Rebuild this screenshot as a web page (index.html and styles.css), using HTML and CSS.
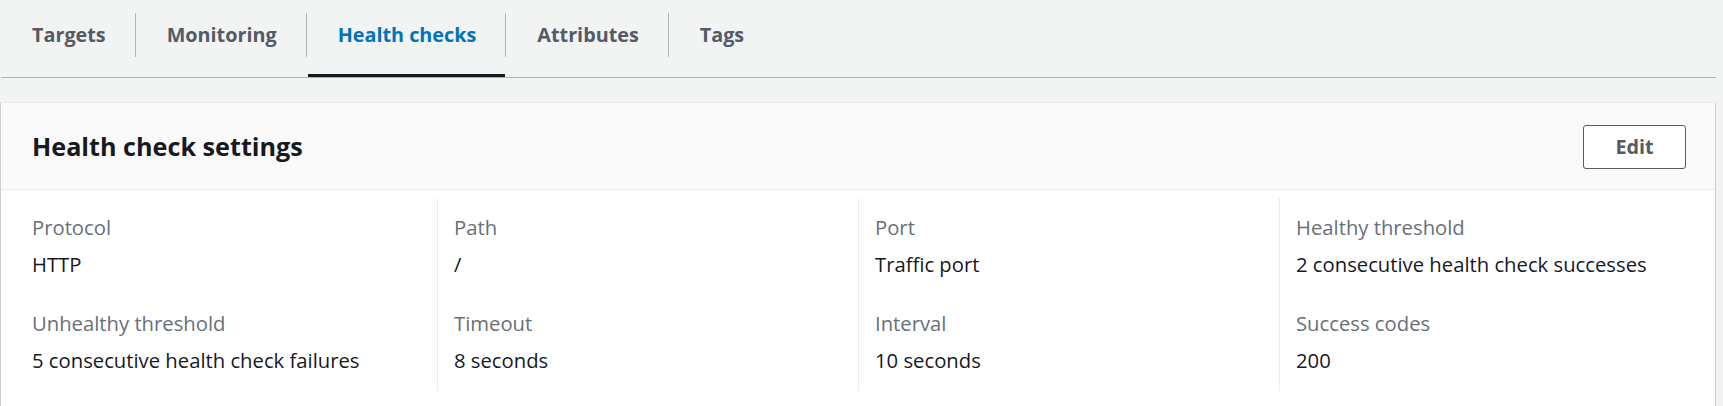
FILE: index.html
```html
<!DOCTYPE html>
<html lang="en">
<head>
<meta charset="utf-8">
<title>Health checks</title>
<link rel="stylesheet" href="styles.css">
</head>
<body>
<div class="page">
  <div class="tabs">
    <div class="tab"><span class="tab-label first">Targets</span></div>
    <div class="tab"><span class="tab-label">Monitoring</span></div>
    <div class="tab active"><span class="tab-label">Health checks</span></div>
    <div class="tab"><span class="tab-label">Attributes</span></div>
    <div class="tab"><span class="tab-label">Tags</span></div>
  </div>
  <div class="card">
    <div class="card-header">
      <h2 class="card-title">Health check settings</h2>
      <button class="btn">Edit</button>
    </div>
    <div class="card-body">
      <div class="col">
        <div class="pair"><div class="label">Protocol</div><div class="value">HTTP</div></div>
        <div class="pair"><div class="label">Unhealthy threshold</div><div class="value">5 consecutive health check failures</div></div>
      </div>
      <div class="col">
        <div class="pair"><div class="label">Path</div><div class="value">/</div></div>
        <div class="pair"><div class="label">Timeout</div><div class="value">8 seconds</div></div>
      </div>
      <div class="col">
        <div class="pair"><div class="label">Port</div><div class="value">Traffic port</div></div>
        <div class="pair"><div class="label">Interval</div><div class="value">10 seconds</div></div>
      </div>
      <div class="col">
        <div class="pair"><div class="label">Healthy threshold</div><div class="value">2 consecutive health check successes</div></div>
        <div class="pair"><div class="label">Success codes</div><div class="value">200</div></div>
      </div>
    </div>
  </div>
</div>
</body>
</html>
```
FILE: styles.css
```css
* { box-sizing: border-box; }
html, body { margin: 0; padding: 0; }
body {
  background: #f2f3f3;
  font-family: "Open Sans", "Noto Sans", Arial, sans-serif;
  font-size: 20.25px;
  line-height: 30px;
  color: #16191f;
  overflow: hidden;
}
.page {
  padding-right: 7px;
}
.tabs {
  display: flex;
  height: 78px;
  border-bottom: 1px solid #aab7b8;
  margin-left: 1px;
}
.tab {
  position: relative;
  height: 77px;
  padding-top: 13px;
}
.tab-label {
  display: block;
  height: 44px;
  padding: 7px 29px 7px 31px;
  border-left: 1px solid #aab7b8;
  font-size: 19.8px;
  font-weight: 700;
  color: #545b64;
  white-space: nowrap;
}
.tab-label.first {
  border-left-color: transparent;
  padding-left: 30px;
}
.tab.active .tab-label { color: #0073bb; }
.tab.active::after {
  content: "";
  position: absolute;
  left: 2px;
  right: 0;
  bottom: 0;
  height: 3px;
  background: #16191f;
}
.card {
  margin-top: 24px;
  background: #ffffff;
  border-top: 1px solid #eaeded;
  border-left: 1px solid #c9d0d1;
  border-right: 1px solid #c9d0d1;
  padding-bottom: 30px;
}
.card-header {
  display: flex;
  align-items: center;
  justify-content: space-between;
  height: 87px;
  padding: 0 29px 0 31px;
  background: #fafafa;
  border-bottom: 1px solid #eaeded;
}
.card-title {
  margin: 0;
  font-size: 25.2px;
  line-height: 32px;
  font-weight: 700;
  color: #16191f;
}
.btn {
  font-family: inherit;
  font-size: 19.8px;
  line-height: 30px;
  font-weight: 700;
  color: #545b64;
  background: #ffffff;
  border: 1px solid #545b64;
  border-radius: 3px;
  padding: 6px 0;
  width: 103px;
  height: 44px;
  margin-top: 1px;
  text-align: center;
}
.card-body {
  display: grid;
  grid-template-columns: repeat(4, 1fr);
  padding: 8px 15px 0 15px;
}
.col {
  padding: 14px 16px 16px 16px;
  display: flex;
  flex-direction: column;
  gap: 29px;
}
.col + .col {
  border-left: 1px solid #eaeded;
}
.label {
  color: #687078;
  margin-bottom: 7px;
}
.value {
  color: #16191f;
}
```
